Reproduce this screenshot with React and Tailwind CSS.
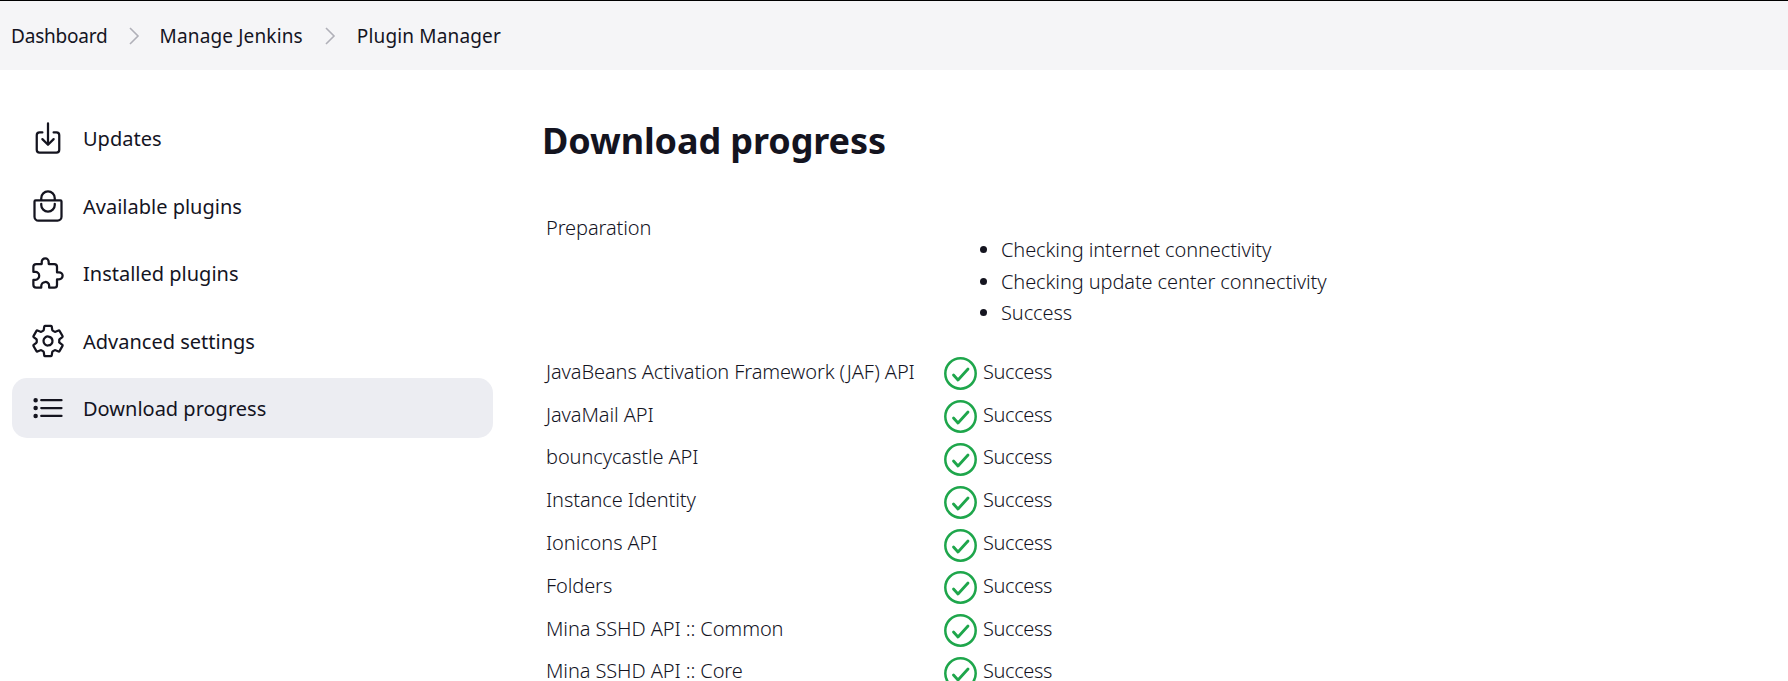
import React from 'react';
import {
  IoDownloadOutline,
  IoBagHandleOutline,
  IoExtensionPuzzleOutline,
  IoSettingsOutline,
  IoListOutline,
} from 'react-icons/io5';

const font = "font-['Noto_Sans',sans-serif]";

const navItems = [
  { label: 'Updates', icon: IoDownloadOutline },
  { label: 'Available plugins', icon: IoBagHandleOutline },
  { label: 'Installed plugins', icon: IoExtensionPuzzleOutline },
  { label: 'Advanced settings', icon: IoSettingsOutline },
  { label: 'Download progress', icon: IoListOutline, active: true },
];

const plugins = [
  'JavaBeans Activation Framework (JAF) API',
  'JavaMail API',
  'bouncycastle API',
  'Instance Identity',
  'Ionicons API',
  'Folders',
  'Mina SSHD API :: Common',
  'Mina SSHD API :: Core',
];

const Chevron = () => (
  <svg className="w-[14px] h-[20px] text-[#b0b0b8]" viewBox="0 0 14 20" fill="none" stroke="currentColor" strokeWidth="1.6">
    <path d="M3 2l8 8-8 8" />
  </svg>
);

const SuccessIcon = () => (
  <svg className="w-[33px] h-[33px] mt-[4px] text-[#1ea64b] shrink-0" viewBox="0 0 33 33" fill="none" stroke="currentColor">
    <circle cx="16.5" cy="16.5" r="15.2" strokeWidth="2.5" />
    <path d="M9.5 18l4.5 5 10-11" strokeWidth="2.8" strokeLinecap="round" strokeLinejoin="round" />
  </svg>
);

const App = () => {
  return (
    <div className={`h-[681px] overflow-hidden bg-white text-[#14141f] ${font}`}>
      {/* Breadcrumb bar */}
      <div className="h-[70px] border-t border-black bg-[#f5f5f7] flex items-center pl-[11px] pt-[1px] text-[19px] font-[450]">
        <span className="tracking-[-0.2px]">Dashboard</span>
        <span className="mx-[19px]"><Chevron /></span>
        <span className="tracking-[0.15px]">Manage Jenkins</span>
        <span className="mx-[20px]"><Chevron /></span>
        <span className="tracking-[0.15px]">Plugin Manager</span>
      </div>

      <div className="flex">
        {/* Sidebar */}
        <nav className="w-[493px] shrink-0 pl-[12px] pt-[38px] flex flex-col gap-[7.5px]">
          {navItems.map(item => {
            const Icon = item.icon;
            return (
              <div
                key={item.label}
                className={`h-[60px] rounded-[15px] flex items-center pl-[18px] gap-[17px] text-[20px] font-[450] ${item.active ? 'bg-[#ecedf2]' : ''}`}
              >
                <Icon size={36} />
                <span className="mt-[2px]">{item.label}</span>
              </div>
            );
          })}
        </nav>

        {/* Main content */}
        <main className="flex-1 pl-[49px] pt-[46px]">
          <h1 className="text-[36px] leading-[50px] font-bold tracking-[-0.1px] mb-[49px]">Download progress</h1>

          <div className="grid grid-cols-[398px_1fr] pl-[4px] text-[20px] text-[#14141f] font-light tracking-[-0.1px]">
            <div className="leading-[26px]">Preparation</div>
            <ul className="list-disc pl-[57px] pt-[19px] pb-[22px] leading-[31.5px]">
              <li>Checking internet connectivity</li>
              <li>Checking update center connectivity</li>
              <li>Success</li>
            </ul>
            {plugins.map(name => (
              <React.Fragment key={name}>
                <div className="h-[42.8px] flex items-center">{name}</div>
                <div className="h-[42.8px] flex items-center gap-[6px]">
                  <SuccessIcon />
                  <span className="tracking-[-0.4px]">Success</span>
                </div>
              </React.Fragment>
            ))}
          </div>
        </main>
      </div>
    </div>
  );
};

export default App;
